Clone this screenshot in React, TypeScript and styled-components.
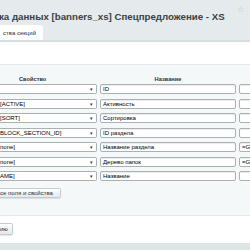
import React from 'react';
import styled, { createGlobalStyle } from 'styled-components';

const GlobalStyle = createGlobalStyle`
  html, body {
    margin: 0;
    padding: 0;
    background: #fff;
  }
  body {
    width: 250px;
    height: 250px;
    overflow: hidden;
    font-family: 'Liberation Sans', Arial, sans-serif;
  }
`;

const rows = [
  { field: '', name: 'ID', extra: '' },
  { field: '[ACTIVE]', name: 'Активность', extra: '' },
  { field: '[SORT]', name: 'Сортировка', extra: '' },
  { field: 'BLOCK_SECTION_ID]', name: 'ID раздела', extra: '' },
  { field: 'none]', name: 'Название раздела', extra: '=G' },
  { field: 'none]', name: 'Дерево папок', extra: '=G' },
  { field: 'AME]', name: 'Название', extra: '' },
];

const App = () => {
  return (
    <Page>
      <GlobalStyle />
      <Header>
        <TitleRow>
          <Title>ка данных [banners_xs] Спецпредложение - XS</Title>
          <Star>☆</Star>
        </TitleRow>
        <Tabs>
          <Tab>ства секций</Tab>
        </Tabs>
      </Header>

      <Content>
        <EditArea>
          <HeadRow>
            <HeadCell $pad={19}>Свойство</HeadCell>
            <HeadCell $center>Название</HeadCell>
            <HeadCell />
          </HeadRow>
          <Grid>
            {rows.map((r, i) => (
              <React.Fragment key={i}>
                <Select>
                  <span>{r.field}</span>
                  <Arrow>▾</Arrow>
                </Select>
                <Input>{r.name}</Input>
                <Input>{r.extra}</Input>
              </React.Fragment>
            ))}
          </Grid>
          <Button>се поля и свойства</Button>
        </EditArea>
        <Footer>
          <Button $tall>ию</Button>
        </Footer>
      </Content>
      <BottomBar />
    </Page>
  );
};

export default App;

const Page = styled.div`
  width: 250px;
  height: 250px;
  display: flex;
  flex-direction: column;
  overflow: hidden;
`;

// серая шапка с заголовком и вкладками
const Header = styled.div`
  background: #e5ebed;
  border-bottom: 2px solid #d6dee0;
`;

const TitleRow = styled.div`
  height: 25px;
  display: flex;
  align-items: flex-start;
  justify-content: space-between;
  padding: 0 6px 0 0;
  box-sizing: border-box;
`;

const Title = styled.div`
  font-size: 9.7px;
  line-height: 11px;
  font-weight: bold;
  color: #3a4042;
  white-space: nowrap;
  margin: 11px 0 0 -1px;
`;

const Star = styled.span`
  font-size: 8px;
  line-height: 8px;
  color: #b5bcbe;
  margin-top: 6px;
`;

const Tabs = styled.div`
  display: flex;
  height: 15px;
`;

const Tab = styled.div`
  width: 43px;
  box-sizing: border-box;
  background: #fff;
  border-radius: 0 3px 0 0;
  font-size: 6px;
  color: #333;
  display: flex;
  align-items: center;
  justify-content: flex-end;
  padding-right: 7px;
  white-space: nowrap;
`;

const Content = styled.div`
  flex: 1;
  display: flex;
  flex-direction: column;
  padding-top: 22px;
`;

// светлая область с таблицей
const EditArea = styled.div`
  background: #f4f8f8;
  border-top: 1px solid #e3eaec;
  border-bottom: 1px solid #e3eaec;
  padding-bottom: 17px;
`;

const columns = `
  display: grid;
  grid-template-columns: 97px 136px 1fr;
  column-gap: 3px;
  margin-right: -20px;
`;

const HeadRow = styled.div`
  ${columns}
  height: 19px;
`;

const HeadCell = styled.div<{ $pad?: number; $center?: boolean }>`
  box-sizing: border-box;
  padding-top: 11px;
  padding-left: ${(p) => (p.$pad ? `${p.$pad}px` : '0')};
  text-align: ${(p) => (p.$center ? 'center' : 'left')};
  font-size: 5.7px;
  line-height: 7px;
  font-weight: bold;
  color: #333;
`;

const Grid = styled.div`
  ${columns}
  row-gap: 4.5px;
  margin-bottom: 7px;
`;

const Select = styled.div`
  height: 10px;
  box-sizing: border-box;
  background: #fff;
  border: 1px solid #a9b1b3;
  border-left: none;
  border-radius: 0 2px 2px 0;
  display: flex;
  align-items: center;
  justify-content: space-between;
  font-size: 6px;
  color: #000;
  white-space: nowrap;
  padding-right: 3px;
`;

const Arrow = styled.span`
  font-size: 5px;
  color: #333;
`;

const Input = styled.div`
  height: 10px;
  box-sizing: border-box;
  background: #fff;
  border: 1px solid #a9b1b3;
  border-radius: 2px;
  box-shadow: inset 0 1px 1px rgba(0, 0, 0, 0.08);
  display: flex;
  align-items: center;
  padding-left: 2px;
  font-size: 6px;
  color: #000;
  white-space: nowrap;
  overflow: hidden;
`;

const Button = styled.div<{ $tall?: boolean }>`
  display: flex;
  align-items: center;
  width: max-content;
  height: ${(p) => (p.$tall ? '12px' : '10px')};
  box-sizing: border-box;
  padding: 0 ${(p) => (p.$tall ? '4px' : '7px')} 0 0;
  background: linear-gradient(#fff, #e2e8ea);
  border: 1px solid #c4ccce;
  border-left: none;
  border-radius: 0 2px 2px 0;
  box-shadow: 0 1px 1px rgba(0, 0, 0, 0.1);
  font-size: 6px;
  color: #333;
  white-space: nowrap;
`;

const Footer = styled.div`
  flex: 1;
  display: flex;
  flex-direction: column;
  align-items: flex-start;
  padding-top: 7px;
`;

const BottomBar = styled.div`
  height: 7px;
  background: #dde5e7;
`;
